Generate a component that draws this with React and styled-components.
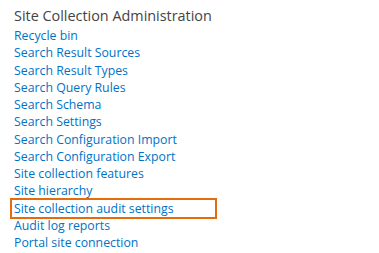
import React from "react";
import styled, { createGlobalStyle } from "styled-components";

const GlobalStyle = createGlobalStyle`
  body {
    margin: 0;
    background: #ffffff;
    font-family: "Open Sans", "Liberation Sans", sans-serif;
  }
`;

const links = [
  "Recycle bin",
  "Search Result Sources",
  "Search Result Types",
  "Search Query Rules",
  "Search Schema",
  "Search Settings",
  "Search Configuration Import",
  "Search Configuration Export",
  "Site collection features",
  "Site hierarchy",
  "Site collection audit settings",
  "Audit log reports",
  "Portal site connection",
];

function App() {
  return (
    <Container>
      <GlobalStyle />
      <Title>Site Collection Administration</Title>
      <LinkList>
        {links.map((l) => (
          <LinkItem key={l} $highlighted={l === "Site collection audit settings"}>
            <a href="#">{l}</a>
          </LinkItem>
        ))}
      </LinkList>
    </Container>
  );
}

export default App;

const Container = styled.div`
  width: 379px;
  height: 253px;
  padding: 5px 0 0 14px;
  box-sizing: border-box;
`;

const Title = styled.h2`
  margin: 0;
  font-size: 14.4px;
  font-weight: 400;
  line-height: 22px;
  color: #444444;
`;

const LinkList = styled.ul`
  list-style: none;
  margin: 0;
  padding: 0;
`;

const LinkItem = styled.li`
  position: relative;
  font-size: 12.3px;
  line-height: 17.25px;
  white-space: nowrap;

  a {
    color: #0072c6;
    text-decoration: none;
  }

  ${(p) =>
    p.$highlighted &&
    `
    &::after {
      content: "";
      position: absolute;
      left: -4px;
      top: -2px;
      width: 207px;
      height: 21px;
      border: 2px solid #e46c0a;
      box-sizing: border-box;
    }
  `}
`;
